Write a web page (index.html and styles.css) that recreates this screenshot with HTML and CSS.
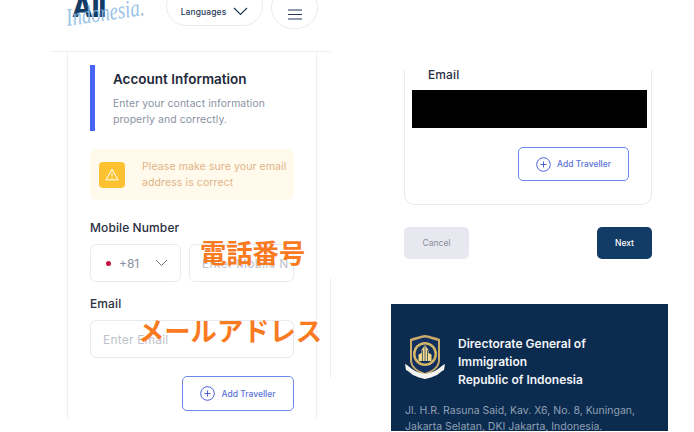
FILE: index.html
```html
<!DOCTYPE html>
<html lang="en">
<head>
    <meta charset="UTF-8">
    <meta name="viewport" content="width=device-width, initial-scale=1.0">
    <title>Add Traveller</title>
    <link rel="stylesheet" href="styles.css">
</head>
<body>
    <!-- Left screenshot -->
    <section class="shot shot-left">
        <header class="topbar">
            <div class="logo">
                <span class="logo-all">All</span>
                <span class="logo-script">Indonesia<span class="logo-dot">.</span></span>
            </div>
            <button class="pill pill-lang">
                <span>Languages</span>
                <svg width="15" height="9" viewBox="0 0 15 9"><path d="M1 1l6.500 6.500L14 1" fill="none" stroke="#1f3a5c" stroke-width="1.200"/></svg>
            </button>
            <button class="pill pill-menu">
                <svg width="16" height="11" viewBox="0 0 16 11"><path d="M1 1h14M1 5.500h14M1 10h14" fill="none" stroke="#1f3a5c" stroke-width="1.100"/></svg>
            </button>
        </header>

        <div class="card">
            <div class="section-head">
                <h2>Account Information</h2>
                <p>Enter your contact information properly and correctly.</p>
            </div>

            <div class="alert">
                <div class="alert-icon">
                    <svg width="14" height="13" viewBox="0 0 14 13"><path d="M7 1.200L13 11.800H1z" fill="none" stroke="#fff" stroke-width="1" stroke-linejoin="round"/><path d="M7 5v3.200M7 9.400v.8" stroke="#fff" stroke-width="1"/></svg>
                </div>
                <p>Please make sure your email address is correct</p>
            </div>

            <label class="field-label">Mobile Number</label>
            <div class="phone-row">
                <div class="input code">
                    <span class="flag-dot"></span>
                    <span class="code-num">+81</span>
                    <svg width="13" height="8" viewBox="0 0 13 8"><path d="M1 1l5.500 5.500L12 1" fill="none" stroke="#6f7687" stroke-width="1"/></svg>
                </div>
                <div class="input number"><span class="placeholder">Enter Mobile N</span></div>
            </div>

            <label class="field-label email-label">Email</label>
            <div class="input"><span class="placeholder">Enter Email</span></div>

            <div class="add-row">
                <button class="add-btn">
                    <svg width="15" height="15" viewBox="0 0 15 15"><circle cx="7.500" cy="7.500" r="6.800" fill="none" stroke="#4a63d8" stroke-width="1"/><path d="M7.500 4.500v6M4.500 7.500h6" stroke="#4a63d8" stroke-width="1"/></svg>
                    <span>Add Traveller</span>
                </button>
            </div>
        </div>

        <div class="scroll-line"></div>
    </section>

    <!-- Orange notes put on top of the screenshot -->
    <div class="note note-phone">電話番号</div>
    <div class="note note-mail">メールアドレス</div>

    <!-- Right screenshot -->
    <section class="shot shot-right">
        <div class="card-right">
            <label class="field-label right-label">Email</label>
            <div class="blackout"></div>
            <div class="add-row add-row-right">
                <button class="add-btn">
                    <svg width="15" height="15" viewBox="0 0 15 15"><circle cx="7.500" cy="7.500" r="6.800" fill="none" stroke="#4a63d8" stroke-width="1"/><path d="M7.500 4.500v6M4.500 7.500h6" stroke="#4a63d8" stroke-width="1"/></svg>
                    <span>Add Traveller</span>
                </button>
            </div>
        </div>
        <div class="actions">
            <button class="btn-cancel">Cancel</button>
            <button class="btn-next">Next</button>
        </div>
    </section>

    <!-- Footer screenshot -->
    <footer class="shot footer">
        <div class="footer-head">
            <svg class="crest" width="40" height="46" viewBox="0 0 40 46">
                <path d="M5 5c6-2 11-3.500 15-4 4 .5 9 2 15 4v21c0 8-7 12-15 15C12 38 5 34 5 26z" fill="#c9ac6a"/>
                <path d="M7 7c5-1.500 9-3 13-3.500C24 4 28 5.500 33 7v19c0 7-6 10.500-13 13-7-2.500-13-6-13-13z" fill="#12305f"/>
                <circle cx="20" cy="20" r="12" fill="#d3b666"/>
                <circle cx="20" cy="20" r="9.500" fill="#12305f"/>
                <path d="M20 11l3.500 5v3l3 1.500V27H13.500v-6.500l3-1.500v-3z" fill="#f0d98a"/>
                <path d="M20 12v15M17.500 16v11M22.500 16v11" stroke="#12305f" stroke-width=".7"/>
                <path d="M0 30c3 1 4 3 7 5 4 3 9 4 13 5 4-1 9-2 13-5 3-2 4-4 7-5l-1 6c-3 1-4 3-7 5-4 2-8 3-12 4-4-1-8-2-12-4-3-2-4-4-7-5z" fill="#f4f4f0"/>
            </svg>
            <h3>Directorate General of Immigration<br>Republic of Indonesia</h3>
        </div>
        <p class="address">Jl. H.R. Rasuna Said, Kav. X6, No. 8, Kuningan, Jakarta Selatan, DKI Jakarta, Indonesia.</p>
    </footer>
</body>
</html>
```

FILE: styles.css
```css
body {
    font-family: Inter, "Noto Sans", sans-serif;
    margin: 0;
    padding: 0;
    background-color: #fff;
    color: #262b3d;
    width: 694px;
    height: 432px;
    position: relative;
    overflow: hidden;
}

button {
    font-family: inherit;
    cursor: pointer;
}

p, h2, h3 {
    margin: 0;
}

/* The pictures lie on a free canvas */
.shot {
    position: absolute;
    overflow: hidden;
}

.shot-left {
    left: 52px;
    top: 0;
    width: 279px;
    height: 418px;
}

.shot-right {
    left: 404px;
    top: 70px;
    width: 248px;
    height: 189px;
}

/* Header */
.topbar {
    height: 51px;
    border-bottom: 1px solid #eeeff2;
    position: relative;
}

.logo {
    position: absolute;
    left: 15px;
    top: 0;
    width: 95px;
    height: 32px;
}

.logo-all {
    position: absolute;
    left: 5px;
    top: -9px;
    font-size: 27px;
    line-height: 33px;
    font-weight: 800;
    letter-spacing: -1px;
    color: #123c66;
}

.logo-script {
    position: absolute;
    left: 1px;
    top: 5px;
    font-family: "Liberation Serif", serif;
    font-style: italic;
    font-size: 25px;
    line-height: 26px;
    color: #8fbde3;
    opacity: .9;
    transform: rotate(-8deg) scaleX(.75);
    transform-origin: left bottom;
    white-space: nowrap;
}

.logo-dot {
    color: #a9b4bf;
}

.pill {
    position: absolute;
    background: #fff;
    border: 1px solid #e9ebef;
    border-radius: 22px;
    display: flex;
    align-items: center;
    justify-content: center;
    padding: 0;
}

.pill-lang {
    left: 114px;
    top: -14px;
    width: 97px;
    height: 40px;
    gap: 7px;
    font-size: 8.500px;
    font-weight: 500;
    color: #1f3a5c;
    padding-top: 11px;
}

.pill-lang span {
    letter-spacing: .1px;
}

.pill-menu {
    left: 219px;
    top: -14px;
    width: 47px;
    height: 43px;
    padding-top: 13px;
}

/* Form card */
.card {
    margin: 0 14px 0 15px;
    height: 367px;
    box-sizing: border-box;
    border-left: 1px solid #eeeff2;
    border-right: 1px solid #eeeff2;
    padding: 13px 22px 0;
}

.section-head {
    border-left: 5px solid #4766f5;
    height: 66px;
    box-sizing: border-box;
    padding: 5px 0 0 18px;
    margin-bottom: 18px;
}

.section-head h2 {
    font-size: 13.500px;
    font-weight: 600;
    line-height: 18px;
    color: #22283a;
}

.section-head p {
    margin-top: 8px;
    font-size: 10.400px;
    line-height: 16px;
    letter-spacing: .1px;
    color: #8a92a3;
}

.alert {
    height: 51px;
    box-sizing: border-box;
    background-color: #fffaeb;
    border-radius: 6px;
    display: flex;
    align-items: center;
    gap: 17px;
    padding: 0 0 0 9px;
    margin-bottom: 19px;
}

.alert-icon {
    width: 26px;
    height: 26px;
    flex: none;
    background-color: #fdc232;
    border-radius: 4px;
    display: flex;
    align-items: center;
    justify-content: center;
}

.alert p {
    font-size: 10.500px;
    line-height: 16px;
    letter-spacing: .1px;
    color: #e1b388;
}

.field-label {
    display: block;
    font-size: 12px;
    font-weight: 500;
    line-height: 18px;
    letter-spacing: .1px;
    color: #2a2f42;
    margin-bottom: 7px;
}

.email-label {
    margin-top: 13px;
}

.phone-row {
    display: flex;
    gap: 8px;
}

.input {
    height: 38px;
    box-sizing: border-box;
    border: 1px solid #e8eaf1;
    border-radius: 6px;
    display: flex;
    align-items: center;
    padding: 0 12px;
    font-size: 12px;
    overflow: hidden;
    background: #fff;
}

.input.code {
    width: 91px;
    flex: none;
    padding: 0 12px 0 15px;
}

.input.number {
    flex: 1;
    min-width: 0;
    white-space: nowrap;
}

.flag-dot {
    width: 5px;
    height: 5px;
    border-radius: 50%;
    background-color: #c8103f;
    margin-right: 8px;
}

.code-num {
    color: #8a90a0;
    font-size: 12px;
    flex: 1;
}

.placeholder {
    color: #c0c3cc;
    letter-spacing: .2px;
}

.add-row {
    display: flex;
    justify-content: flex-end;
    margin-top: 18px;
}

.add-btn {
    width: 112px;
    height: 35px;
    box-sizing: border-box;
    background: #fff;
    border: 1px solid #6f88ec;
    border-radius: 5px;
    display: flex;
    align-items: center;
    justify-content: center;
    gap: 6px;
    font-size: 8.500px;
    font-weight: 500;
    color: #5a72d8;
    padding: 0;
}

.scroll-line {
    position: absolute;
    right: 0;
    top: 278px;
    width: 1px;
    height: 100px;
    background-color: #eeeff2;
}

/* Right column */
.card-right {
    display: flow-root;
    height: 135px;
    box-sizing: border-box;
    border: 1px solid #e8eaf3;
    border-top: none;
    border-radius: 0 0 10px 10px;
    padding: 0 4px 0 7px;
}

.right-label {
    margin: -4px 0 6px 16px;
}

.blackout {
    height: 38px;
    background-color: #000;
}

.add-row-right {
    margin: 19px 18px 0 0;
}

.add-row-right .add-btn {
    width: 111px;
    height: 34px;
}

.actions {
    display: flex;
    justify-content: space-between;
    margin-top: 22px;
}

.btn-cancel, .btn-next {
    height: 32px;
    border: none;
    border-radius: 5px;
    font-size: 8.500px;
    padding: 0;
}

.btn-cancel {
    width: 65px;
    background-color: #e8e9f0;
    color: #8b8d98;
    font-weight: 400;
}

.btn-next {
    width: 55px;
    background-color: #123c66;
    color: #fff;
    font-weight: 500;
}

/* Footer */
.footer {
    left: 391px;
    top: 304px;
    width: 277px;
    height: 127px;
    box-sizing: border-box;
    background-color: #0b2b4f;
    padding: 30px 14px 0;
}

.footer-head {
    display: flex;
    align-items: flex-start;
    gap: 13px;
}

.crest {
    flex: none;
}

.footer-head h3 {
    font-size: 12px;
    font-weight: 600;
    line-height: 18px;
    color: #f2f4f7;
    padding-top: 1px;
}

.address {
    margin-top: 14px;
    font-size: 10.500px;
    line-height: 16px;
    color: #8fa0b4;
}

/* Orange notes */
.note {
    position: absolute;
    font-family: "Noto Sans CJK JP", sans-serif;
    font-weight: 700;
    font-size: 26.300px;
    line-height: 38px;
    color: #f97a1f;
    white-space: nowrap;
}

.note-phone {
    left: 200px;
    top: 233px;
}

.note-mail {
    left: 138px;
    top: 311px;
}
```
